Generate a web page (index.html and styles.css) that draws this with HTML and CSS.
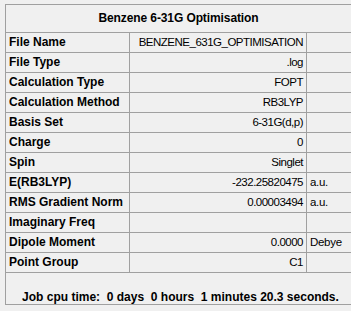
FILE: index.html
```html
<!DOCTYPE html>
<html>
<head>
    <meta charset="UTF-8">
    <title>Benzene 6-31G Optimisation</title>
    <link rel="stylesheet" href="styles.css">
</head>
<body>
    <div class="panel">
        <div class="title">Benzene 6-31G Optimisation</div>
        <div class="sheet">
            <div class="key">File Name</div><div class="val">BENZENE_631G_OPTIMISATION</div><div class="unit"></div>
            <div class="key">File Type</div><div class="val">.log</div><div class="unit"></div>
            <div class="key">Calculation Type</div><div class="val">FOPT</div><div class="unit"></div>
            <div class="key">Calculation Method</div><div class="val">RB3LYP</div><div class="unit"></div>
            <div class="key">Basis Set</div><div class="val">6-31G(d,p)</div><div class="unit"></div>
            <div class="key">Charge</div><div class="val">0</div><div class="unit"></div>
            <div class="key">Spin</div><div class="val">Singlet</div><div class="unit"></div>
            <div class="key">E(RB3LYP)</div><div class="val">-232.25820475</div><div class="unit">a.u.</div>
            <div class="key">RMS Gradient Norm</div><div class="val">0.00003494</div><div class="unit">a.u.</div>
            <div class="key">Imaginary Freq</div><div class="val"></div><div class="unit"></div>
            <div class="key">Dipole Moment</div><div class="val">0.0000</div><div class="unit">Debye</div>
            <div class="key">Point Group</div><div class="val">C1</div><div class="unit"></div>
        </div>
        <div class="footer">Job cpu time:  0 days  0 hours  1 minutes 20.3 seconds.</div>
    </div>
</body>
</html>
```

FILE: styles.css
```css
* {
    margin: 0;
    padding: 0;
    box-sizing: content-box;
}

body {
    background-color: #f0f0f0;
    font-family: 'Liberation Sans', Arial, sans-serif;
    color: #000;
}

.panel {
    margin: 4px 0 0 5px;
    width: 345px;
    border: 1px solid #a0a0a0;
}

.title {
    height: 27px;
    line-height: 27px;
    text-align: center;
    font-size: 12px;
    font-weight: bold;
    letter-spacing: -0.1px;
    border-bottom: 1px solid #a0a0a0;
}

.sheet {
    display: grid;
    grid-template-columns: 123px 177px 1fr;
}

.key, .val, .unit {
    height: 19px;
    line-height: 19px;
    border-bottom: 1px solid #a0a0a0;
    white-space: nowrap;
}

.key {
    padding-left: 3px;
    width: 120px;
    border-right: 1px solid #a0a0a0;
    font-size: 12px;
    font-weight: bold;
}

.val {
    padding-right: 3px;
    width: 174px;
    text-align: right;
    border-right: 1px solid #a0a0a0;
    font-size: 11.5px;
    letter-spacing: -0.5px;
}

.unit {
    padding-left: 4px;
    font-size: 11.5px;
    letter-spacing: -0.3px;
}

.footer {
    height: 31px;
    display: flex;
    align-items: flex-end;
    justify-content: center;
    padding-left: 4px;
    font-size: 12px;
    font-weight: bold;
    line-height: 14px;
    white-space: pre;
}
```
